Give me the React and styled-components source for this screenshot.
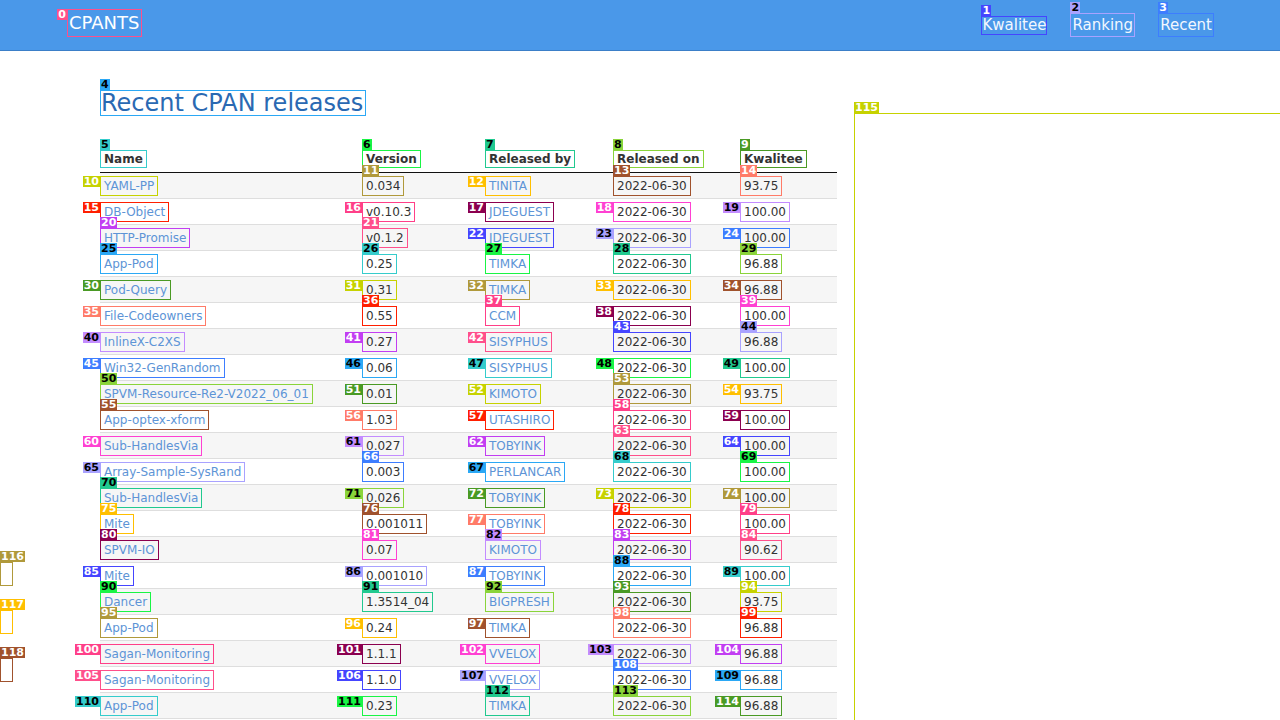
import React from 'react'
import styled, { createGlobalStyle } from 'styled-components'

// label colours of the overlay marks, cycling every 21
const PALETTE = [
	['#ff4f8b', '#fff'],
	['#4545ff', '#fff'],
	['#a9a2ff', '#000'],
	['#3d7dff', '#fff'],
	['#2ba8f5', '#000'],
	['#35cccc', '#000'],
	['#19f545', '#000'],
	['#21c98f', '#000'],
	['#8ad43a', '#000'],
	['#4a9a24', '#fff'],
	['#c6d200', '#fff'],
	['#b0993b', '#fff'],
	['#ffbf00', '#fff'],
	['#a0522d', '#fff'],
	['#ff7b68', '#fff'],
	['#ff1f00', '#fff'],
	['#ff3f88', '#fff'],
	['#8b004f', '#fff'],
	['#ff40d2', '#fff'],
	['#c38cff', '#000'],
	['#c23ef2', '#fff'],
]

const COLUMNS = ['Name', 'Version', 'Released by', 'Released on', 'Kwalitee']

const RELEASES = [
	['YAML-PP', '0.034', 'TINITA', '93.75', 'LTLTT'],
	['DB-Object', 'v0.10.3', 'JDEGUEST', '100.00', 'LLLLL'],
	['HTTP-Promise', 'v0.1.2', 'JDEGUEST', '100.00', 'TTLLL'],
	['App-Pod', '0.25', 'TIMKA', '96.88', 'TTTTT'],
	['Pod-Query', '0.31', 'TIMKA', '96.88', 'LLLLL'],
	['File-Codeowners', '0.55', 'CCM', '100.00', 'LTTLT'],
	['InlineX-C2XS', '0.27', 'SISYPHUS', '96.88', 'LLLTT'],
	['Win32-GenRandom', '0.06', 'SISYPHUS', '100.00', 'LLLLL'],
	['SPVM-Resource-Re2-V2022_06_01', '0.01', 'KIMOTO', '93.75', 'TLLTL'],
	['App-optex-xform', '1.03', 'UTASHIRO', '100.00', 'TLLTL'],
	['Sub-HandlesVia', '0.027', 'TOBYINK', '100.00', 'LLLTL'],
	['Array-Sample-SysRand', '0.003', 'PERLANCAR', '100.00', 'LTLTT'],
	['Sub-HandlesVia', '0.026', 'TOBYINK', '100.00', 'TLLLL'],
	['Mite', '0.001011', 'TOBYINK', '100.00', 'TTLTT'],
	['SPVM-IO', '0.07', 'KIMOTO', '90.62', 'TTTTT'],
	['Mite', '0.001010', 'TOBYINK', '100.00', 'LLLTL'],
	['Dancer', '1.3514_04', 'BIGPRESH', '93.75', 'TTTTT'],
	['App-Pod', '0.24', 'TIMKA', '96.88', 'TLLTT'],
	['Sagan-Monitoring', '1.1.1', 'VVELOX', '96.88', 'LLLLL'],
	['Sagan-Monitoring', '1.1.0', 'VVELOX', '96.88', 'LLLTL'],
	['App-Pod', '0.23', 'TIMKA', '96.88', 'LLTTL'],
]

const Mark = ({ n, side = 'T', children }) => {
	const [c, ink] = PALETTE[n % 21]
	return (
		<Frame $c={c}>
			<Tag $c={c} $ink={ink} $side={side}>
				{n}
			</Tag>
			{children}
		</Frame>
	)
}

const App = () => {
	return (
		<>
			<Global />
			<Navbar>
				<Mark n={0} side='L'>
					<Brand href='#'>CPANTS</Brand>
				</Mark>
				<Nav>
					<Mark n={1}>
						<NavLink href='#' $tight>
							Kwalitee
						</NavLink>
					</Mark>
					<Mark n={2}>
						<NavLink href='#'>Ranking</NavLink>
					</Mark>
					<Mark n={3}>
						<NavLink href='#'>Recent</NavLink>
					</Mark>
				</Nav>
			</Navbar>
			<Main>
				<Content>
					<Mark n={4}>
						<Title>Recent CPAN releases</Title>
					</Mark>
					<Table>
						<HeadRow>
							{COLUMNS.map((c, i) => (
								<Cell key={c}>
									<Mark n={5 + i}>
										<Th>{c}</Th>
									</Mark>
								</Cell>
							))}
						</HeadRow>
						{RELEASES.map(([name, version, author, kwalitee, sides], r) => {
							const base = 10 + r * 5
							return (
								<Row key={r}>
									<Cell>
										<Mark n={base} side={sides[0]}>
											<Link href='#'>{name}</Link>
										</Mark>
									</Cell>
									<Cell>
										<Mark n={base + 1} side={sides[1]}>
											<Value>{version}</Value>
										</Mark>
									</Cell>
									<Cell>
										<Mark n={base + 2} side={sides[2]}>
											<Link href='#'>{author}</Link>
										</Mark>
									</Cell>
									<Cell>
										<Mark n={base + 3} side={sides[3]}>
											<Value>2022-06-30</Value>
										</Mark>
									</Cell>
									<Cell>
										<Mark n={base + 4} side={sides[4]}>
											<Value>{kwalitee}</Value>
										</Mark>
									</Cell>
								</Row>
							)
						})}
					</Table>
				</Content>
				<Aside>
					<Mark n={115}>
						<SideBox />
					</Mark>
				</Aside>
			</Main>
			<Strays>
				{[116, 117, 118].map((n) => (
					<Mark key={n} n={n}>
						<Stray />
					</Mark>
				))}
			</Strays>
		</>
	)
}

const Global = createGlobalStyle`
  html, body {
    margin: 0;
    height: 720px;
    overflow: hidden;
    background: #fff;
    font-family: "DejaVu Sans", Verdana, sans-serif;
    font-size: 12px;
    color: #333;
  }
  * { box-sizing: border-box; }
`
const Frame = styled.span`
	position: relative;
	display: inline-block;
	vertical-align: top;
	border: 1px solid ${(p) => p.$c};
`
const Tag = styled.span`
	position: absolute;
	${(p) =>
		p.$side === 'L'
			? 'right: calc(100% + 1px); top: -1px;'
			: 'bottom: calc(100% + 1px); left: -1px;'}
	padding: 0 1px;
	background: ${(p) => p.$c};
	color: ${(p) => p.$ink};
	font: bold 11px/11px 'DejaVu Sans', sans-serif;
	white-space: nowrap;
`
const Navbar = styled.header`
	display: flex;
	justify-content: space-between;
	align-items: flex-start;
	height: 51px;
	padding: 9px 66px 0 67px;
	background-color: #4a98e9;
	border-bottom: 1px solid #3b7fc8;
`
const Brand = styled.a`
	display: block;
	padding: 0 2px 0 1px;
	font-size: 18px;
	line-height: 26px;
	color: #fff;
	text-decoration: none;
`
const Nav = styled.nav`
	display: flex;
	align-items: center;
	gap: 23px;
	margin-top: 4px;
	height: 24px;
`
const NavLink = styled.a`
	display: block;
	padding: ${(p) => (p.$tight ? '0' : '3px 1px 2px')};
	font-size: 15px;
	line-height: 17px;
	color: #f2f7ff;
	text-decoration: none;
`
const Main = styled.main`
	display: flex;
	align-items: flex-start;
	padding: 39px 0 0 100px;
`
const Content = styled.section`
	width: 737px;
	flex-shrink: 0;
`
const Title = styled.h1`
	margin: 0;
	padding-right: 2px;
	font-size: 24px;
	font-weight: normal;
	line-height: 24px;
	color: #2a69b2;
`
const Table = styled.div`
	margin-top: 34px;
`
const Row = styled.div`
	display: grid;
	grid-template-columns: 262px 123px 128px 127px 97px;
	align-items: start;
	height: 26px;
	padding-top: 3px;
	border-bottom: 1px solid #dedede;
	&:nth-child(even) {
		background: #f6f6f6;
	}
`
const HeadRow = styled(Row)`
	height: 23px;
	padding-top: 0;
	border-bottom-color: #111;
	background: none;
`
const Cell = styled.div`
	white-space: nowrap;
`
const Th = styled.span`
	display: block;
	padding: 1px 3px;
	font-weight: bold;
	line-height: 14px;
	color: #333;
`
const Value = styled.span`
	display: block;
	padding: 2px 3px;
	line-height: 14px;
	color: #333;
`
const Link = styled(Value).attrs({ as: 'a' })`
	color: #5d94d6;
	text-decoration: none;
`
const Aside = styled.aside`
	flex-shrink: 0;
	margin: 23px 0 0 17px;
`
const SideBox = styled.div`
	width: 600px;
	height: 700px;
`
const Strays = styled.div`
	position: absolute;
	left: 0;
	top: 562px;
	display: flex;
	flex-direction: column;
	gap: 24px;
`
const Stray = styled.div`
	width: 11px;
	height: 22px;
`

export default App
